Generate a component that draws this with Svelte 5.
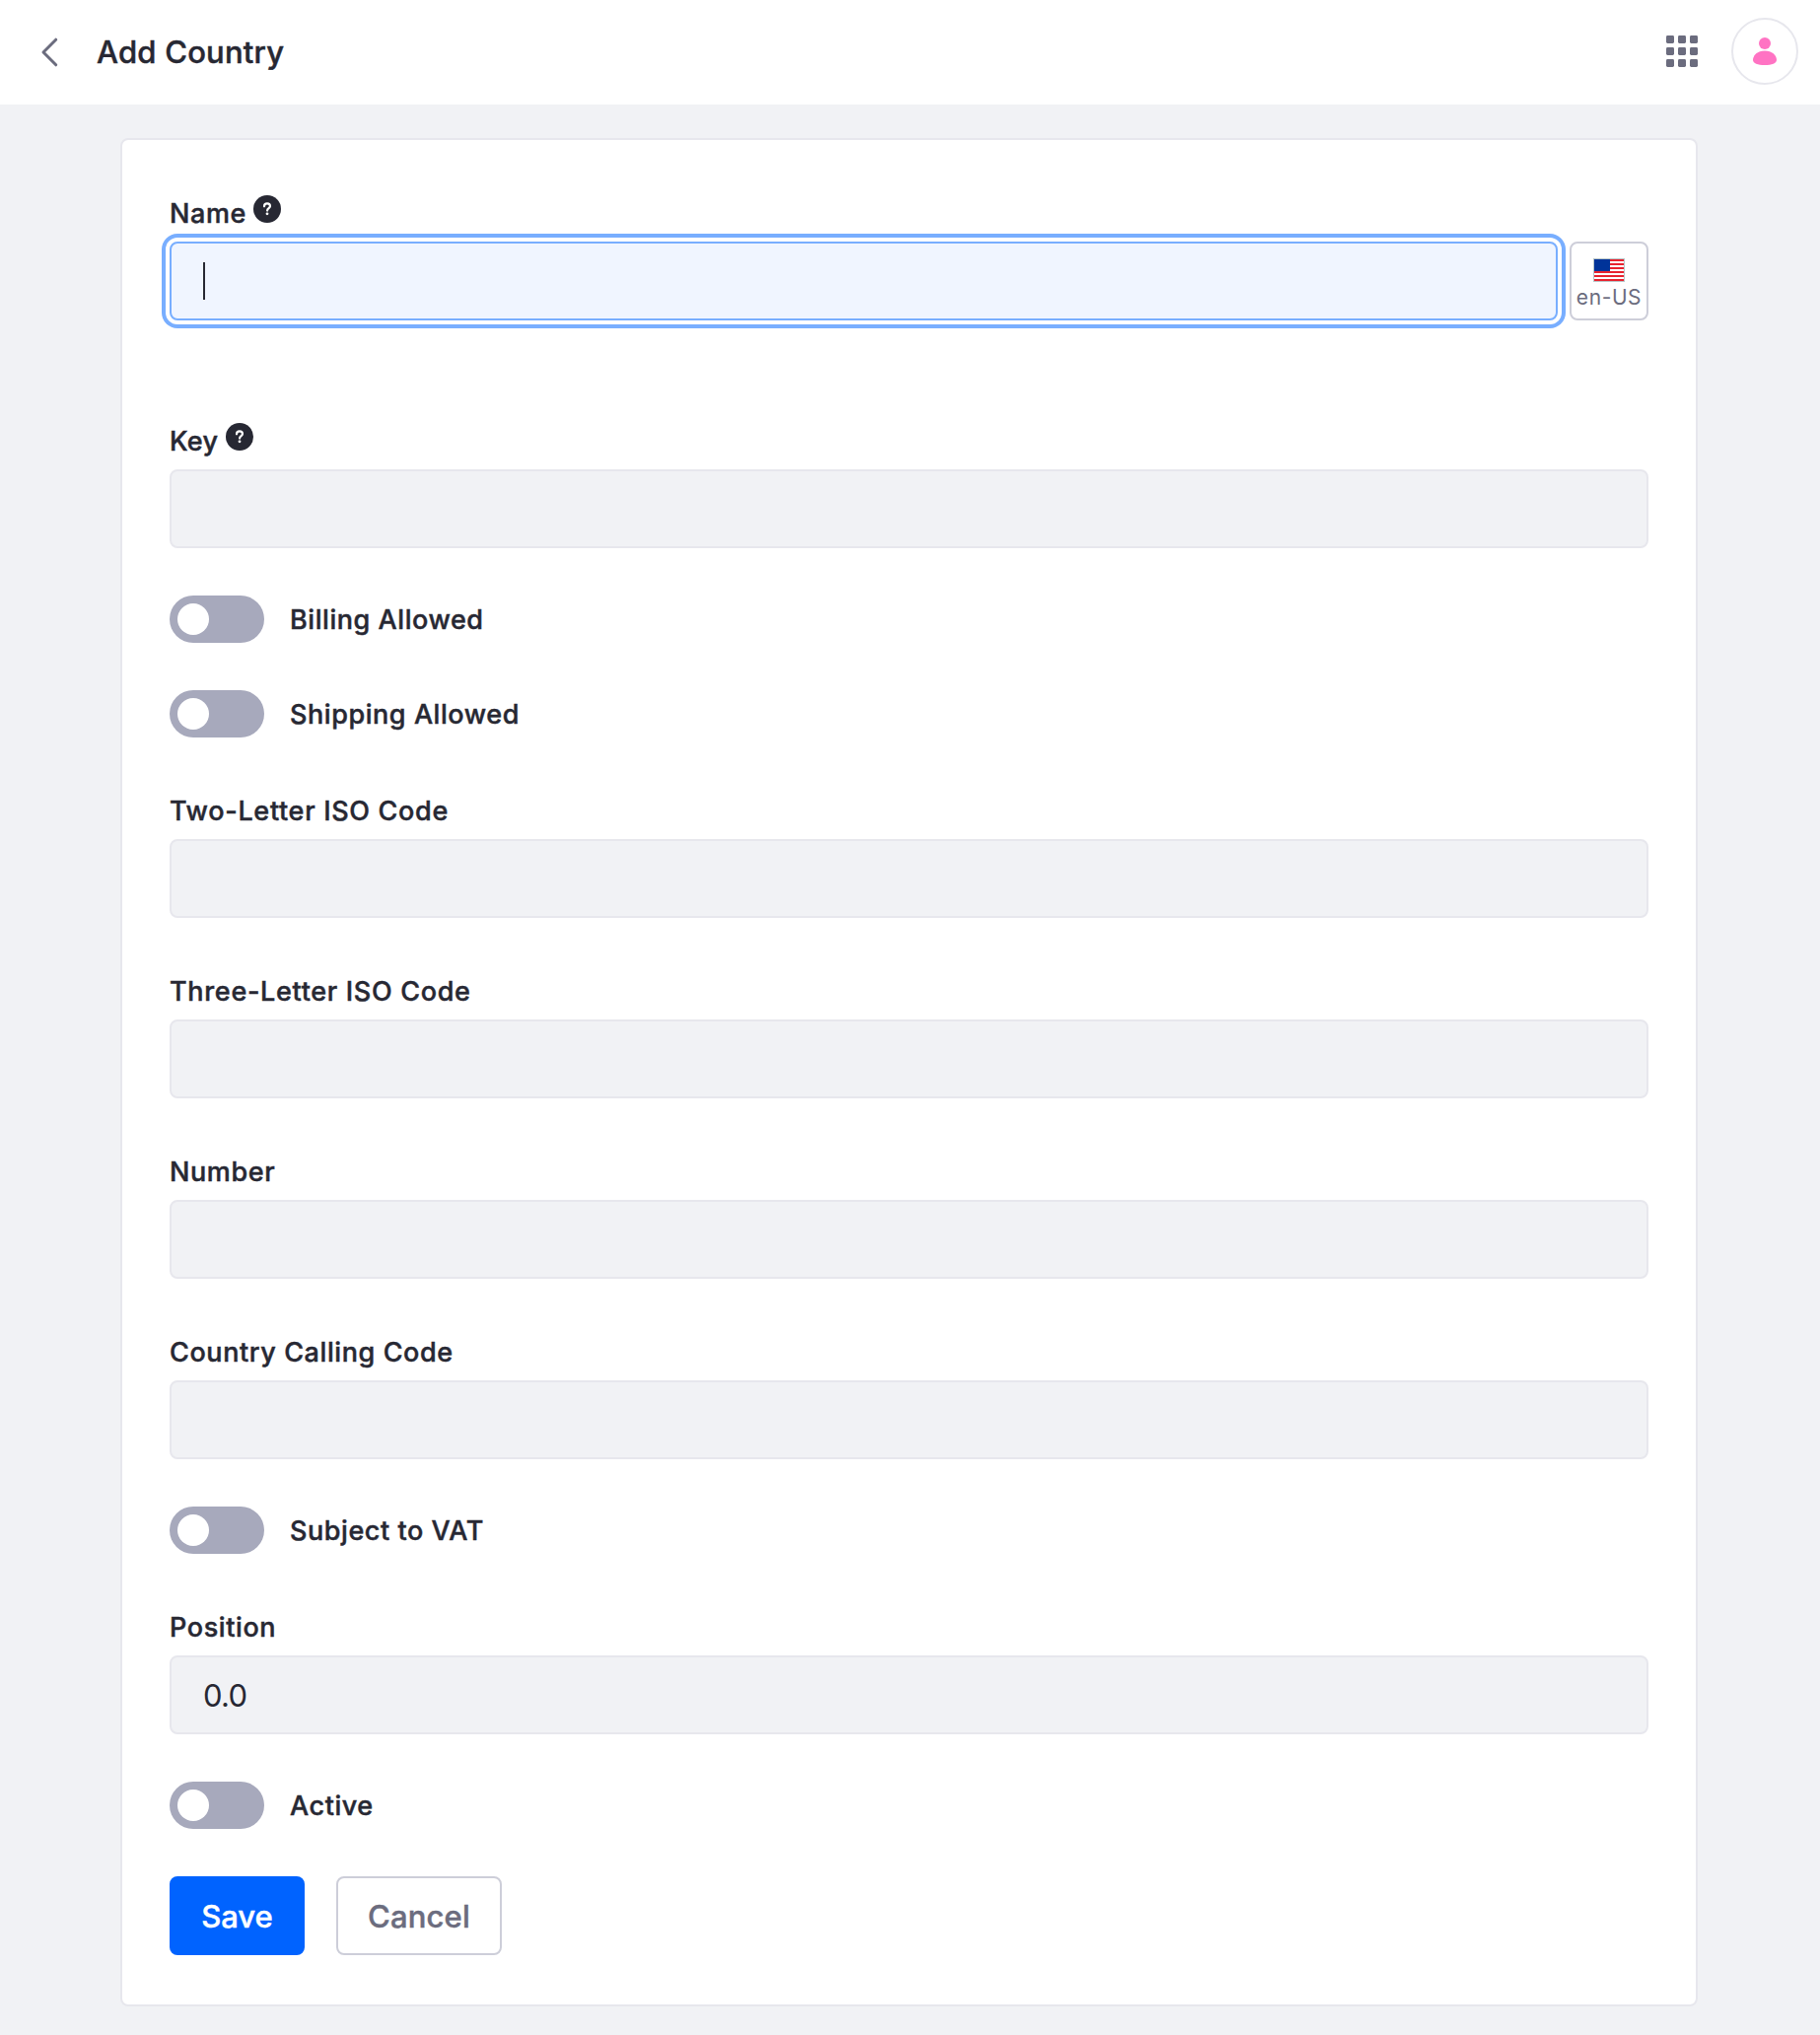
<script lang="ts">
  type Row = {
    kind: 'text' | 'toggle';
    label: string;
    value?: string;
    help?: boolean;
    localized?: boolean;
    wide?: boolean;
  };

  const rows: Row[] = [
    { kind: 'text', label: 'Name', help: true, localized: true },
    { kind: 'text', label: 'Key', help: true },
    { kind: 'toggle', label: 'Billing Allowed' },
    { kind: 'toggle', label: 'Shipping Allowed' },
    { kind: 'text', label: 'Two-Letter ISO Code', wide: true },
    { kind: 'text', label: 'Three-Letter ISO Code', wide: true },
    { kind: 'text', label: 'Number' },
    { kind: 'text', label: 'Country Calling Code' },
    { kind: 'toggle', label: 'Subject to VAT' },
    { kind: 'text', label: 'Position', value: '0.0' },
    { kind: 'toggle', label: 'Active' }
  ];

  const cells = [0, 12, 24];
  const stripes = [0, 4, 8, 12, 16, 20];
</script>

<header class="topbar">
  <svg class="back" width="18" height="30" viewBox="0 0 18 30" aria-hidden="true">
    <path d="M15.7 2.2 3 15l12.7 12.8" />
  </svg>
  <h1>Add Country</h1>
  <svg class="apps" width="32" height="32" viewBox="0 0 32 32" aria-hidden="true">
    {#each cells as y}
      {#each cells as x}
        <rect {x} {y} width="8" height="8" rx="1.4" />
      {/each}
    {/each}
  </svg>
  <div class="avatar">
    <svg width="24" height="28" viewBox="0 0 24 28" aria-hidden="true">
      <circle cx="12" cy="6" r="6" />
      <path d="M12 13.6c7.2 0 12 4.4 12 9.2 0 3.6-4.8 5.2-12 5.2S0 26.4 0 22.8c0-4.8 4.8-9.2 12-9.2z" />
    </svg>
  </div>
</header>

<main class="sheet">
  {#each rows as row}
    {#if row.kind === 'toggle'}
      <div class="toggle-row">
        <span class="switch"><span class="knob"></span></span>
        <span class="toggle-label">{row.label}</span>
      </div>
    {:else}
      <div class="field" class:localized={row.localized}>
        <div class="label">
          <span class:wide={row.wide} class:tight={row.label === 'Key'}>{row.label}</span>
          {#if row.help}
            <svg class="help" width="28" height="28" viewBox="0 0 28 28" aria-hidden="true">
              <circle cx="14" cy="14" r="14" />
              <path d="M11 11.3c0-1.9 1.3-2.9 3-2.9s3 1 3 2.7c0 2-2.9 2.1-2.9 4.5" />
              <circle class="dot" cx="14" cy="18.8" r="1.4" />
            </svg>
          {/if}
        </div>
        <div class="controls">
          <div class="input" class:focused={row.localized}>
            {#if row.localized}<span class="caret"></span>{/if}
            {#if row.value}<span>{row.value}</span>{/if}
          </div>
          {#if row.localized}
            <div class="locale">
              <svg width="32" height="24" viewBox="0 0 32 24" aria-hidden="true">
                <rect width="32" height="24" fill="#b9c6c9" />
                <rect x="1" y="1" width="30" height="22" fill="#fff" />
                {#each stripes as y}
                  <rect x="1" y={y + 1} width="30" height="2" fill="#e8222e" />
                {/each}
                <rect x="1" y="1" width="16" height="12" fill="#003399" />
              </svg>
              <span>en-US</span>
            </div>
          {/if}
        </div>
      </div>
    {/if}
  {/each}

  <div class="actions">
    <button class="save">Save</button>
    <button class="cancel">Cancel</button>
  </div>
</main>

<style>
  :global(body) {
    background: #f1f2f5;
    color: #272833;
    font-family: Inter, 'Liberation Sans', sans-serif;
  }

  .topbar {
    display: flex;
    align-items: center;
    height: 106px;
    padding: 0 22px 2px 41px;
    box-sizing: border-box;
    background: #fff;
  }
  .back {
    margin-top: 2px;
  }
  .back path {
    fill: none;
    stroke: #6b6c7e;
    stroke-width: 3;
    stroke-linecap: round;
    stroke-linejoin: round;
  }
  h1 {
    flex: 1;
    margin: 2px 0 0 39px;
    font-size: 31px;
    line-height: 40px;
    font-weight: 500;
    letter-spacing: 0.22px;
  }
  /* Sits between the medium and semibold cuts of the typeface. */
  h1,
  .label span,
  .toggle-label,
  button {
    -webkit-text-stroke: 0.45px currentColor;
  }
  .apps {
    fill: #6b6c7e;
  }
  .avatar {
    display: flex;
    align-items: center;
    justify-content: center;
    width: 68px;
    height: 68px;
    margin-left: 34px;
    box-sizing: border-box;
    border: 2px solid #e7e7ed;
    border-radius: 50%;
  }
  .avatar svg {
    fill: #ff73c3;
  }

  .sheet {
    width: 1600px;
    margin: 34px 0 0 122px;
    padding: 0 48px 50px;
    box-sizing: border-box;
    border: 2px solid #e7e7ed;
    border-radius: 8px;
    background: #fff;
  }

  .field {
    padding-top: 55px;
  }
  .localized {
    padding-bottom: 48px;
  }
  .label {
    display: flex;
    align-items: baseline;
    gap: 7px;
    height: 40px;
    margin-bottom: 8px;
    font-size: 27px;
    line-height: 40px;
    font-weight: 500;
    letter-spacing: 0.6px;
  }
  .wide {
    letter-spacing: 0.68px;
  }
  .tight {
    margin-right: 1px;
    letter-spacing: 0.3px;
  }
  .help {
    fill: #272833;
  }
  .help path {
    fill: none;
    stroke: #fff;
    stroke-width: 2.2;
    stroke-linecap: round;
  }
  .help .dot {
    fill: #fff;
  }

  .controls {
    display: flex;
    gap: 12px;
  }
  .input {
    display: flex;
    flex: 1;
    align-items: center;
    height: 80px;
    padding: 0 32px;
    box-sizing: border-box;
    border: 2px solid #e7e7ed;
    border-radius: 8px;
    background: #f1f2f5;
    font-size: 31px;
    letter-spacing: -0.7px;
  }
  .focused {
    border-color: #78aeff;
    background: #f0f5ff;
    box-shadow: 0 0 0 4px #fff, 0 0 0 8px #78aeff;
  }
  .caret {
    width: 2px;
    height: 38px;
    background: #272833;
  }
  .locale {
    display: flex;
    flex-direction: column;
    align-items: center;
    width: 80px;
    height: 80px;
    padding-top: 15px;
    box-sizing: border-box;
    border: 2px solid #cdced9;
    border-radius: 8px;
    color: #6b6c7e;
    font-size: 21px;
    line-height: 32px;
    letter-spacing: 0.59px;
  }
  .locale svg {
    flex: none;
  }

  .toggle-row {
    display: flex;
    align-items: center;
    gap: 26px;
    height: 48px;
    margin-top: 48px;
  }
  .switch {
    width: 96px;
    height: 48px;
    padding: 8px;
    box-sizing: border-box;
    border-radius: 24px;
    background: #a7a9bc;
  }
  .knob {
    display: block;
    width: 32px;
    height: 32px;
    border-radius: 50%;
    background: #fff;
  }
  .toggle-label {
    padding-top: 2px;
    font-size: 27px;
    line-height: 40px;
    font-weight: 500;
    letter-spacing: 0.56px;
  }

  .actions {
    display: flex;
    gap: 32px;
    margin-top: 48px;
  }
  button {
    height: 80px;
    padding: 2px 0 0;
    border: 2px solid #cdced9;
    border-radius: 8px;
    background: #fff;
    color: #6b6c7e;
    font: 500 31px/40px Inter, 'Liberation Sans', sans-serif;
  }
  .save {
    width: 137px;
    border-color: #0063ff;
    background: #0063ff;
    color: #fff;
  }
  .cancel {
    width: 168px;
    letter-spacing: 0.15px;
  }
</style>
